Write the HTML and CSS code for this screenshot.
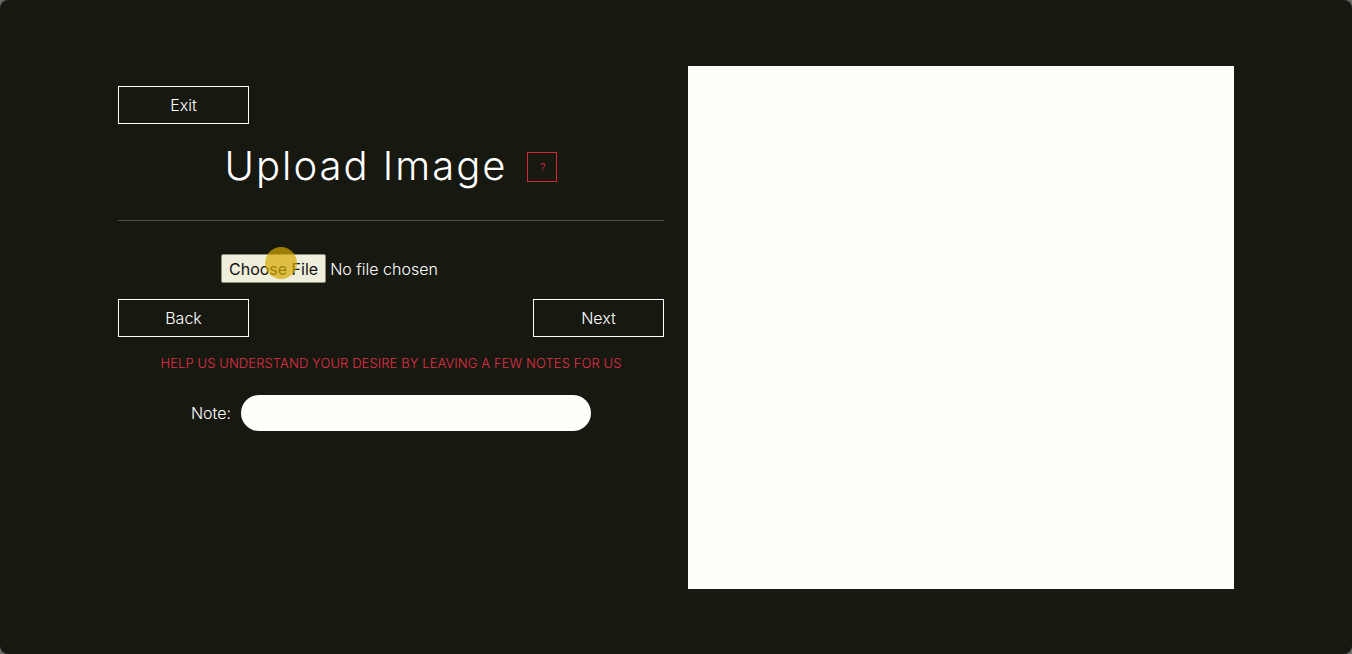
FILE: index.html
```html
<!DOCTYPE html>
<html lang="en">
<head>
<meta charset="utf-8">
<title>Upload Image</title>
<link rel="stylesheet" href="styles.css">
</head>
<body>
<div class="page">
  <main class="layout">
    <section class="panel">
      <div class="top-row">
        <button class="btn">Exit</button>
      </div>
      <div class="title-row">
        <h1 class="title">Upload Image</h1>
        <button class="help">?</button>
      </div>
      <hr class="divider">
      <div class="file-row">
        <div class="file-wrap">
          <input class="file" type="file">
          <span class="cursor-dot"></span>
        </div>
      </div>
      <div class="nav-row">
        <button class="btn">Back</button>
        <button class="btn">Next</button>
      </div>
      <p class="hint">HELP US UNDERSTAND YOUR DESIRE BY LEAVING A FEW NOTES FOR US</p>
      <div class="note-row">
        <label class="note-label" for="note">Note:</label>
        <input class="note-input" id="note" type="text">
      </div>
    </section>
    <section class="preview"></section>
  </main>
</div>
</body>
</html>
```
FILE: styles.css
```css
* { box-sizing: border-box; }
html, body { margin: 0; height: 100%; }
body {
  background: #6a6a6a;
  font-family: "Inter", "Open Sans", sans-serif;
  color: #ffffff;
}
.page {
  height: 654px;
  background: #17180f;
  border-radius: 8px;
  overflow: hidden;
}
.layout {
  display: flex;
  gap: 24px;
  padding: 66px 0 0 118px;
}
.panel {
  width: 546px;
  display: flex;
  flex-direction: column;
  padding-top: 20px;
}
.top-row { display: flex; }
.btn {
  width: 131px;
  height: 38px;
  background: transparent;
  border: 1px solid #ffffff;
  color: #ffffff;
  font-family: inherit;
  font-size: 16px;
  font-weight: 300;
  padding: 0;
  cursor: pointer;
}
.title-row {
  display: flex;
  justify-content: center;
  align-items: center;
  gap: 20px;
  margin-top: 12px;
  height: 60px;
}
.title {
  margin: 0;
  font-size: 40px;
  font-weight: 300;
  line-height: 60px;
  letter-spacing: 2px;
}
.help {
  width: 30px;
  height: 30px;
  border: 1px solid #d0283c;
  background: transparent;
  color: #d0283c;
  font-size: 10px;
  padding: 0;
  margin-top: 2px;
}
.divider {
  margin: 24px 0 0;
  border: 0;
  border-top: 1px solid #4e4e44;
  height: 0;
}
.file-row {
  display: flex;
  justify-content: center;
  margin-top: 33px;
}
.file-wrap { position: relative; width: 340px; }
.file {
  width: 340px;
  color: #ffffff;
  font-family: inherit;
  font-size: 16px;
  font-weight: 300;
}
.file::file-selector-button {
  font-family: inherit;
  font-size: 16px;
  height: 29px;
  padding: 0 7px;
  margin-right: 4px;
  background: #efefdc;
  color: #111;
  border: 1px solid #8e8e80;
  border-radius: 2px;
}
.cursor-dot {
  position: absolute;
  left: 44px;
  top: -7px;
  width: 32px;
  height: 32px;
  border-radius: 50%;
  background: rgba(214, 170, 0, 0.7);
  pointer-events: none;
}
.nav-row {
  display: flex;
  justify-content: space-between;
  margin-top: 16px;
}
.hint {
  margin: 17px 0 0;
  text-align: center;
  color: #e0304a;
  font-size: 13px;
  font-weight: 300;
  line-height: 18px;
  letter-spacing: 0.1px;
}
.note-row {
  display: flex;
  justify-content: center;
  align-items: center;
  gap: 10px;
  margin-top: 23px;
}
.note-label {
  font-size: 16px;
  font-weight: 300;
}
.note-input {
  width: 350px;
  height: 36px;
  border: 0;
  border-radius: 18px;
  background: #fefefa;
  outline: none;
}
.preview {
  width: 546px;
  height: 523px;
  background: #fefefa;
}
```
